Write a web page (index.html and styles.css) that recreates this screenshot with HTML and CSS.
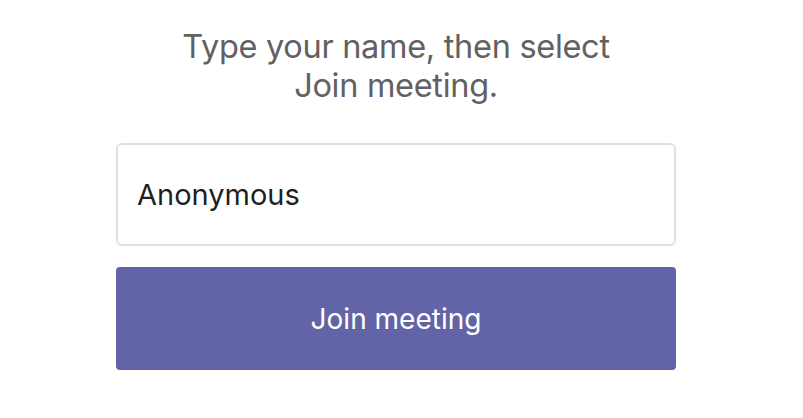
FILE: index.html
```html
<!DOCTYPE html>
<html>
<head>
<meta charset="utf-8">
<link rel="stylesheet" href="styles.css">
</head>
<body>
<main class="page">
  <p class="prompt">Type your name, then select<br>Join meeting.</p>
  <div class="form">
    <div class="name-field">Anonymous</div>
    <button class="join-btn">Join meeting</button>
  </div>
</main>
</body>
</html>
```
FILE: styles.css
```css
html, body {
  margin: 0;
  padding: 0;
  background: #ffffff;
}
body {
  font-family: Inter, "Noto Sans", sans-serif;
  width: 803px;
  height: 418px;
  overflow: hidden;
}
.page {
  display: flex;
  flex-direction: column;
  align-items: center;
  padding-top: 27px;
  padding-right: 11px;
}
.prompt {
  margin: 0;
  text-align: center;
  font-size: 32.5px;
  line-height: 39px;
  color: #616161;
  letter-spacing: -0.3px;
}
.form {
  width: 560px;
  margin-top: 38px;
  display: flex;
  flex-direction: column;
  gap: 21px;
}
.name-field {
  box-sizing: border-box;
  height: 103px;
  border: 2px solid #e0e0e0;
  border-radius: 6px;
  padding: 0 19px;
  display: flex;
  align-items: center;
  font-size: 29px;
  color: #1f1f1f;
}
.join-btn {
  height: 103px;
  border: none;
  border-radius: 4px;
  background: #6264a7;
  color: #ffffff;
  font-family: Inter, "Noto Sans", sans-serif;
  font-size: 28px;
  padding: 0;
}
```
